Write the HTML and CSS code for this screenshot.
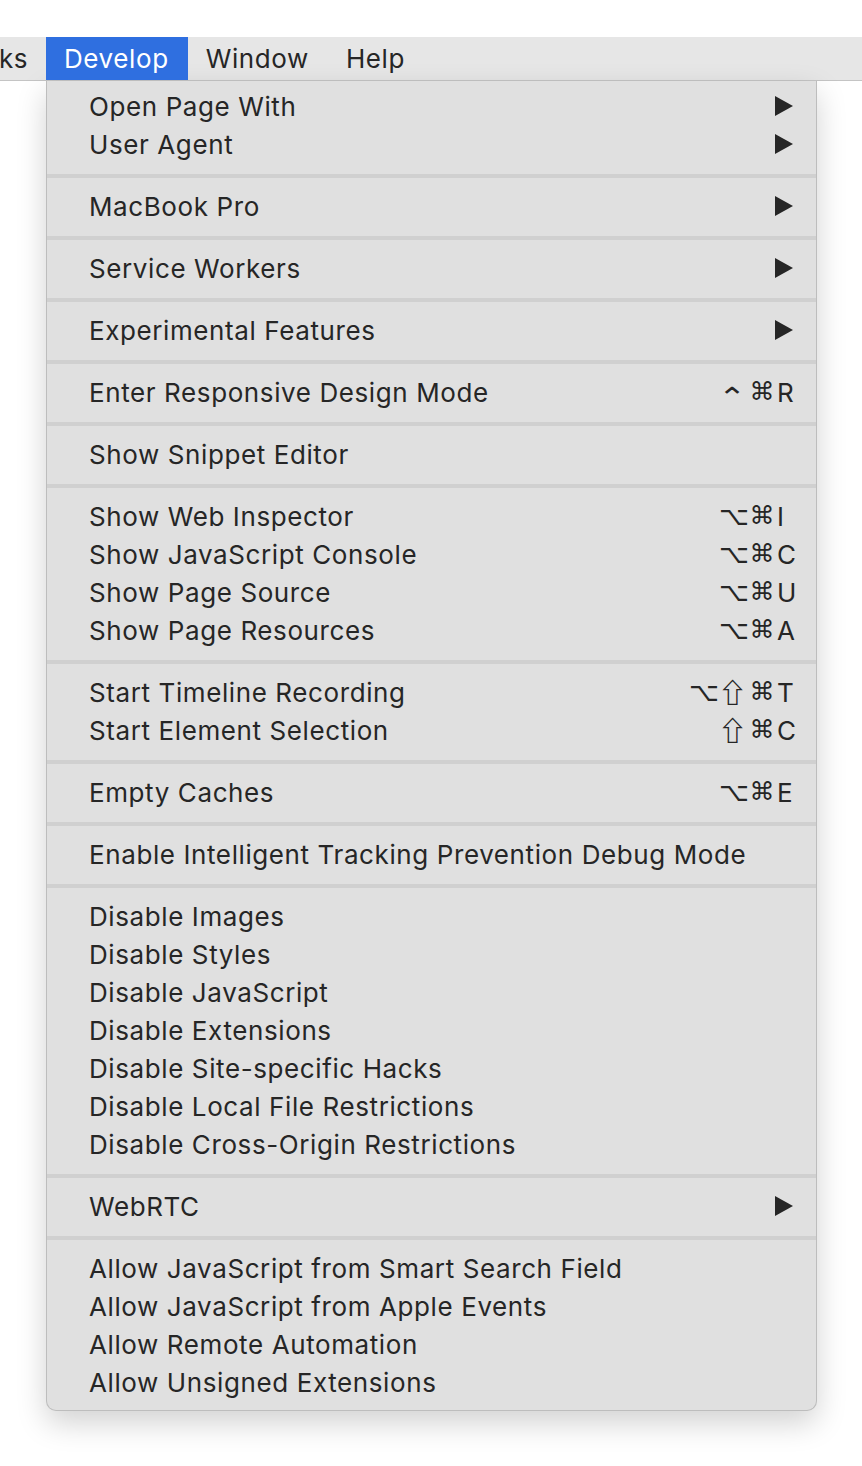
FILE: index.html
```html
<!DOCTYPE html>
<html>
<head>
<meta charset="utf-8">
<link rel="stylesheet" href="styles.css">
</head>
<body>
<div class="top-space"></div>
<div class="menubar">
  <span class="mb-item mb-cut">ks</span>
  <span class="mb-item mb-active">Develop</span>
  <span class="mb-item">Window</span>
  <span class="mb-item">Help</span>
</div>
<div class="menu">
  <div class="item"><span>Open Page With</span><span class="arrow"></span></div>
  <div class="item"><span>User Agent</span><span class="arrow"></span></div>
  <div class="sep"></div>
  <div class="item"><span>MacBook Pro</span><span class="arrow"></span></div>
  <div class="sep"></div>
  <div class="item"><span>Service Workers</span><span class="arrow"></span></div>
  <div class="sep"></div>
  <div class="item"><span>Experimental Features</span><span class="arrow"></span></div>
  <div class="sep"></div>
  <div class="item"><span>Enter Responsive Design Mode</span><span class="key"><span class="sym ctrl">⌃</span><span class="sym">⌘</span><span class="ltr">R</span></span></div>
  <div class="sep"></div>
  <div class="item"><span>Show Snippet Editor</span></div>
  <div class="sep"></div>
  <div class="item"><span>Show Web Inspector</span><span class="key"><span class="sym opt">⌥</span><span class="sym">⌘</span><span class="ltr">I</span></span></div>
  <div class="item"><span>Show JavaScript Console</span><span class="key"><span class="sym opt">⌥</span><span class="sym">⌘</span><span class="ltr">C</span></span></div>
  <div class="item"><span>Show Page Source</span><span class="key"><span class="sym opt">⌥</span><span class="sym">⌘</span><span class="ltr">U</span></span></div>
  <div class="item"><span>Show Page Resources</span><span class="key"><span class="sym opt">⌥</span><span class="sym">⌘</span><span class="ltr">A</span></span></div>
  <div class="sep"></div>
  <div class="item"><span>Start Timeline Recording</span><span class="key"><span class="sym opt">⌥</span><span class="sym shift">⇧</span><span class="sym">⌘</span><span class="ltr">T</span></span></div>
  <div class="item"><span>Start Element Selection</span><span class="key"><span class="sym shift">⇧</span><span class="sym">⌘</span><span class="ltr">C</span></span></div>
  <div class="sep"></div>
  <div class="item"><span>Empty Caches</span><span class="key"><span class="sym opt">⌥</span><span class="sym">⌘</span><span class="ltr">E</span></span></div>
  <div class="sep"></div>
  <div class="item"><span>Enable Intelligent Tracking Prevention Debug Mode</span></div>
  <div class="sep"></div>
  <div class="item"><span>Disable Images</span></div>
  <div class="item"><span>Disable Styles</span></div>
  <div class="item"><span>Disable JavaScript</span></div>
  <div class="item"><span>Disable Extensions</span></div>
  <div class="item"><span>Disable Site-specific Hacks</span></div>
  <div class="item"><span>Disable Local File Restrictions</span></div>
  <div class="item"><span>Disable Cross-Origin Restrictions</span></div>
  <div class="sep"></div>
  <div class="item"><span>WebRTC</span><span class="arrow"></span></div>
  <div class="sep"></div>
  <div class="item"><span>Allow JavaScript from Smart Search Field</span></div>
  <div class="item"><span>Allow JavaScript from Apple Events</span></div>
  <div class="item"><span>Allow Remote Automation</span></div>
  <div class="item"><span>Allow Unsigned Extensions</span></div>
</div>
</body>
</html>
```
FILE: styles.css
```css
html, body {
  margin: 0;
  padding: 0;
  background: #ffffff;
}
body {
  font-family: "Inter", "Helvetica Neue", "Liberation Sans", sans-serif;
  color: #262626;
  letter-spacing: 0.6px;
  width: 862px;
  height: 1466px;
  overflow: hidden;
}
.top-space {
  height: 37px;
}
.menubar {
  height: 43px;
  background: #e6e6e6;
  border-bottom: 1px solid #c4c4c4;
  display: flex;
  align-items: stretch;
  font-size: 26px;
}
.mb-item {
  display: flex;
  align-items: center;
  padding: 0 19px 0 18px;
  color: #262626;
}
.mb-cut {
  padding: 0;
  margin-left: -1px;
  width: 47px;
}
.mb-active {
  background: #2f6fe0;
  color: #ffffff;
}
.menu {
  box-sizing: border-box;
  margin-left: 46px;
  width: 771px;
  background: #e0e0e0;
  border: 1px solid #bdbdbd;
  border-top: none;
  border-radius: 0 0 10px 10px;
  box-shadow: 0 12px 30px rgba(0, 0, 0, 0.18);
  padding: 6px 0 9px;
  font-size: 26px;
}
.item {
  height: 38px;
  display: flex;
  align-items: center;
  justify-content: space-between;
  padding: 0 19px 0 42px;
  white-space: nowrap;
}
.sep {
  height: 4px;
  background: #d0d0d0;
  margin: 11px 0 9px;
}
.arrow {
  width: 0;
  height: 0;
  border-top: 10px solid transparent;
  border-bottom: 10px solid transparent;
  border-left: 18px solid #262626;
  margin-right: 4px;
}
.key {
  display: flex;
  align-items: center;
  letter-spacing: 0;
}
.sym {
  font-family: "DejaVu Sans", sans-serif;
  display: inline-block;
  width: 26px;
  margin-left: 4px;
  text-align: center;
  font-size: 25px;
  line-height: 30px;
}
.opt {
  font-size: 26px;
}
.shift {
  font-family: "Noto Sans CJK JP", "DejaVu Sans", sans-serif;
  font-size: 27px;
  font-weight: 700;
  transform: scaleX(1.1);
}
.ctrl {
  font-family: "Noto Sans CJK JP", "DejaVu Sans", sans-serif;
  font-size: 28px;
  transform: translateY(3px) scaleX(1.2);
}
.ltr {
  display: inline-block;
  min-width: 20px;
  text-align: left;
  margin-left: 2px;
}
```
